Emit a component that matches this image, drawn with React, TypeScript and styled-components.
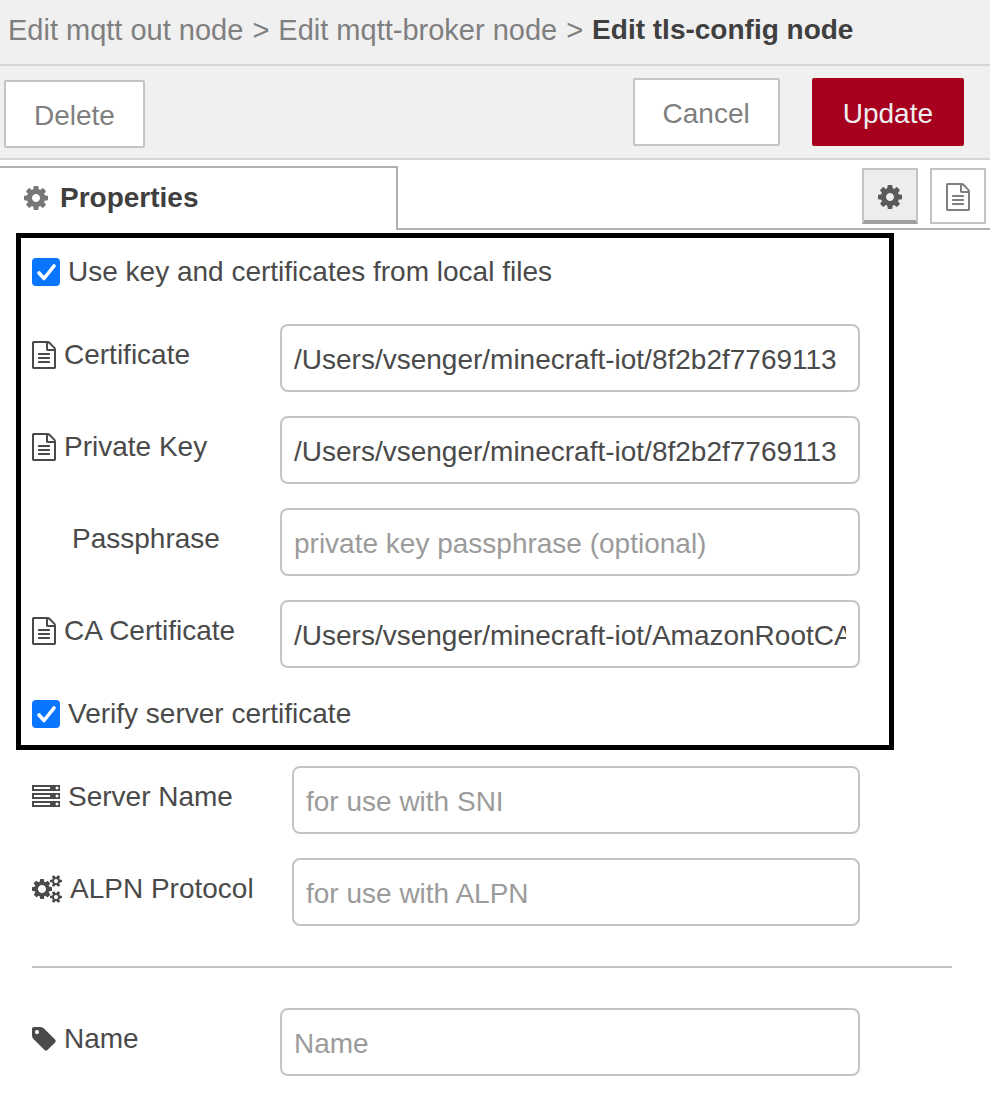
import React from 'react';
import styled, { createGlobalStyle } from 'styled-components';

const GlobalStyle = createGlobalStyle`
  *, *::before, *::after { box-sizing: border-box; }
  body {
    margin: 0;
    background: #fff;
    color: #4a4a4a;
    font-family: "Liberation Sans", Arial, sans-serif;
    font-size: 28px;
    line-height: 40px;
  }
  button, input { font: inherit; }
`;

const ICONS = {
  cog: {
    width: 24,
    box: '0 0 1536 1792',
    d: 'M1024 896q0-106-75-181t-181-75-181 75-75 181 75 181 181 75 181-75 75-181zm512-109v222q0 12-8 23t-20 13l-185 28q-19 54-39 91 35 50 107 138 10 12 10 25t-9 23q-27 37-99 108t-94 71q-12 0-26-9l-138-108q-44 23-91 38-16 136-29 186-7 28-36 28h-222q-14 0-24.5-8.5t-11.5-21.5l-28-184q-49-16-90-37l-141 107q-10 9-25 9-14 0-25-11-126-114-165-168-7-10-7-23 0-12 8-23 15-21 51-66.5t54-70.5q-27-50-41-99l-183-27q-13-2-21-12.5t-8-23.5v-222q0-12 8-23t19-13l186-28q14-46 39-92-40-57-107-138-10-12-10-24 0-10 9-23 26-36 98.5-107.5t94.5-71.5q13 0 26 10l138 107q44-23 91-38 16-136 29-186 7-28 36-28h222q14 0 24.5 8.5t11.5 21.5l28 184q49 16 90 37l142-107q9-9 24-9 13 0 25 10 129 119 165 170 7 8 7 22 0 12-8 23-15 21-51 66.5t-54 70.5q26 50 41 98l183 28q13 2 21 12.5t8 23.5z',
  },
  file: {
    width: 24,
    box: '128 0 1536 1792',
    d: 'M1596 380q28 28 48 76t20 88v1152q0 40-28 68t-68 28h-1344q-40 0-68-28t-28-68v-1600q0-40 28-68t68-28h896q40 0 88 20t76 48zm-444-244v376h376q-10-29-22-41l-313-313q-12-12-41-22zm384 1528v-1024h-416q-40 0-68-28t-28-68v-416h-768v1536h1280zm-1024-864q0-14 9-23t23-9h704q14 0 23 9t9 23v64q0 14-9 23t-23 9h-704q-14 0-23-9t-9-23v-64zm736 224q14 0 23 9t9 23v64q0 14-9 23t-23 9h-704q-14 0-23-9t-9-23v-64q0-14 9-23t23-9h704zm0 256q14 0 23 9t9 23v64q0 14-9 23t-23 9h-704q-14 0-23-9t-9-23v-64q0-14 9-23t23-9h704z',
  },
  server: {
    width: 28,
    box: '0 0 1792 1792',
    d: 'M128 1408h1024v-128h-1024v128zm0-512h1024v-128h-1024v128zm1568 448q0-40-28-68t-68-28-68 28-28 68 28 68 68 28 68-28 28-68zm-1568-960h1024v-128h-1024v128zm1568 448q0-40-28-68t-68-28-68 28-28 68 28 68 68 28 68-28 28-68zm0-512q0-40-28-68t-68-28-68 28-28 68 28 68 68 28 68-28 28-68zm96 832v384h-1792v-384h1792zm0-512v384h-1792v-384h1792zm0-512v384h-1792v-384h1792z',
  },
  cogs: {
    width: 30,
    box: '0 0 1920 1792',
    d: 'M896 896q0-106-75-181t-181-75-181 75-75 181 75 181 181 75 181-75 75-181zm768 512q0-52-38-90t-90-38-90 38-38 90q0 53 37.5 90.5t90.5 37.5 90.5-37.5 37.5-90.5zm0-1024q0-52-38-90t-90-38-90 38-38 90q0 53 37.5 90.5t90.5 37.5 90.5-37.5 37.5-90.5zm-384 421v185q0 10-7 19.5t-16 10.5l-155 24q-11 35-32 76 34 48 90 115 7 11 7 20 0 12-7 19-23 30-82.5 89.5t-78.5 59.5q-11 0-21-7l-115-90q-37 19-77 31-11 108-23 155-7 24-30 24h-186q-11 0-20-7.5t-10-17.5l-23-153q-34-10-75-31l-118 89q-7 7-20 7-11 0-21-8-144-133-144-160 0-9 7-19 10-14 41-53t47-61q-23-44-35-82l-152-24q-10-1-17-9.5t-7-19.5v-185q0-10 7-19.5t16-10.5l155-24q11-35 32-76-34-48-90-115-7-11-7-20 0-12 7-20 22-30 82-89t79-59q11 0 21 7l115 90q34-18 77-32 11-108 23-154 7-24 30-24h186q11 0 20 7.5t10 17.5l23 153q34 10 75 31l118-89q8-7 20-7 11 0 21 8 144 133 144 160 0 8-7 19-12 16-42 54t-45 60q23 48 34 82l152 23q10 2 17 10.5t7 19.5zm640 533v140q0 16-149 31-12 27-30 52 51 113 51 138 0 4-4 7-122 71-124 71-8 0-46-47t-52-68q-20 2-30 2t-30-2q-14 21-52 68t-46 47q-2 0-124-71-4-3-4-7 0-25 51-138-18-25-30-52-149-15-149-31v-140q0-16 149-31 13-29 30-52-51-113-51-138 0-4 4-7 4-2 35-20t59-34 30-16q8 0 46 46.5t52 67.5q20-2 30-2t30 2q51-71 92-112l6-2q4 0 124 70 4 3 4 7 0 25-51 138 17 23 30 52 149 15 149 31zm0-1024v140q0 16-149 31-12 27-30 52 51 113 51 138 0 4-4 7-122 71-124 71-8 0-46-47t-52-68q-20 2-30 2t-30-2q-14 21-52 68t-46 47q-2 0-124-71-4-3-4-7 0-25 51-138-18-25-30-52-149-15-149-31v-140q0-16 149-31 13-29 30-52-51-113-51-138 0-4 4-7 4-2 35-20t59-34 30-16q8 0 46 46.5t52 67.5q20-2 30-2t30 2q51-71 92-112l6-2q4 0 124 70 4 3 4 7 0 25-51 138 17 23 30 52 149 15 149 31z',
  },
  tag: {
    width: 24,
    box: '128 0 1536 1792',
    d: 'M576 448q0-53-37.5-90.5t-90.5-37.5-90.5 37.5-37.5 90.5 37.5 90.5 90.5 37.5 90.5-37.5 37.5-90.5zm1067 576q0 53-37 90l-491 492q-39 37-91 37-53 0-90-37l-715-716q-38-37-64.5-101t-26.5-117v-416q0-52 38-90t90-38h416q53 0 117 26.5t102 64.5l715 714q37 39 37 91z',
  },
};

type IconName = keyof typeof ICONS;

const Glyph = styled.svg`
  display: block;
  flex: none;
  height: 28px;
  fill: currentColor;
  fill-rule: evenodd;
`;

const Icon = ({ name }: { name: IconName }) => (
  <Glyph width={ICONS[name].width} viewBox={ICONS[name].box} aria-hidden="true">
    <path d={ICONS[name].d} />
  </Glyph>
);

const Header = styled.header`
  padding: 10px 8px 14px;
  border-bottom: 2px solid #d6d6d6;
  background: #f0f0f0;
  white-space: nowrap;
`;

const Crumbs = styled.ol`
  display: flex;
  gap: 9px;
  margin: 0;
  padding: 0;
  list-style: none;
`;

const Crumb = styled.li<{ $current?: boolean }>`
  display: flex;
  gap: 9px;
  color: ${(p) => (p.$current ? '#3f3f3f' : '#7f7f7f')};
  font-size: ${(p) => (p.$current ? 28 : 29)}px;
  font-weight: ${(p) => (p.$current ? 700 : 400)};
  &:not(:last-child)::after { content: ">"; }
`;

const Toolbar = styled.div`
  display: flex;
  align-items: flex-start;
  padding: 12px 26px 10px 4px;
  border-bottom: 2px solid #d6d6d6;
  background: #f0f0f0;
`;

const Actions = styled.div`
  display: flex;
  gap: 32px;
  margin-left: auto;
`;

const Button = styled.button<{ $primary?: boolean; $low?: boolean }>`
  height: 68px;
  margin-top: ${(p) => (p.$low ? 2 : 0)}px;
  padding: 3px ${(p) => (p.$primary ? 29 : 28)}px 0;
  border: 2px solid ${(p) => (p.$primary ? '#a6001e' : '#c4c4c4')};
  border-radius: 2px;
  background: ${(p) => (p.$primary ? '#a6001e' : '#fff')};
  color: ${(p) => (p.$primary ? '#eee' : '#7f7f7f')};
`;

const TabBar = styled.div`
  display: flex;
  padding-top: 6px;
`;

const Tab = styled.h2`
  display: flex;
  align-items: center;
  gap: 12px;
  width: 398px;
  height: 64px;
  margin: 0;
  padding: 0 0 2px 24px;
  border: solid #b0b0b0;
  border-width: 2px 2px 0 0;
  color: #3f3f3f;
  font-size: 28px;
  svg { color: #777; }
`;

const TabTools = styled.div`
  display: flex;
  flex: 1;
  justify-content: flex-end;
  gap: 12px;
  padding: 2px 4px 4px 0;
  border-bottom: 2px solid #b0b0b0;
`;

const ToolButton = styled.button<{ $active?: boolean }>`
  display: flex;
  align-items: center;
  justify-content: center;
  width: 56px;
  height: 56px;
  padding: 2px 0 0;
  border: 2px solid #c4c4c4;
  border-bottom-color: ${(p) => (p.$active ? '#a0a0a0' : '#c4c4c4')};
  box-shadow: ${(p) => (p.$active ? 'inset 0 -2px #a0a0a0' : 'none')};
  background: ${(p) => (p.$active ? '#ededed' : '#fff')};
  color: ${(p) => (p.$active ? '#5a5a5a' : '#7f7f7f')};
`;

const Form = styled.form`
  display: flex;
  flex-direction: column;
  padding: 3px 0 24px;
`;

const CheckRow = styled.label`
  display: flex;
  align-items: center;
  gap: 8px;
  height: 44px;
`;

const Highlight = styled.fieldset`
  display: flex;
  flex-direction: column;
  gap: 24px;
  min-width: 0;
  margin: 0 96px 16px 16px;
  padding: 12px 29px 9px 11px;
  border: 5px solid #000;
  ${CheckRow}:first-child { margin-bottom: 6px; }
`;

const CheckBox = styled.input`
  appearance: none;
  width: 28px;
  height: 28px;
  margin: 0;
  border-radius: 4px;
  background: #fff;
  &:checked {
    background: #0a75ff url("data:image/svg+xml,%3Csvg xmlns='http://www.w3.org/2000/svg' viewBox='0 0 28 28'%3E%3Cpath d='M7 15l5 5.500L22 8' fill='none' stroke='white' stroke-width='3.600' stroke-linecap='round' stroke-linejoin='round'/%3E%3C/svg%3E");
  }
`;

const Fields = styled.div`
  display: flex;
  flex-direction: column;
  gap: 24px;
  margin: 0 130px 0 32px;
`;

const Row = styled.div`
  display: flex;
  align-items: flex-start;
`;

const Label = styled.label<{ $wide?: boolean; $indent?: boolean }>`
  display: flex;
  flex: none;
  align-items: center;
  gap: 8px;
  width: ${(p) => (p.$wide ? 260 : 248)}px;
  height: 62px;
  padding-left: ${(p) => (p.$indent ? 40 : 0)}px;
  white-space: nowrap;
`;

const TextBox = styled.input`
  flex: 1;
  min-width: 0;
  height: 68px;
  padding: 4px 12px 0;
  border: 2px solid #c4c4c4;
  border-radius: 8px;
  background: #fff;
  color: #4a4a4a;
  outline: 0;
  &::placeholder { color: #9b9b9b; opacity: 1; }
`;

const Divider = styled.hr`
  width: auto;
  height: 2px;
  margin: 40px 38px 40px 32px;
  border: 0;
  background: #c4c4c4;
`;

interface FieldProps {
  id: string;
  label: string;
  icon?: IconName;
  value?: string;
  placeholder?: string;
  wide?: boolean;
}

const Field = ({ id, label, icon, value, placeholder, wide }: FieldProps) => (
  <Row>
    <Label htmlFor={id} $wide={wide} $indent={!icon}>
      {icon && <Icon name={icon} />}
      {label}
    </Label>
    <TextBox id={id} type="text" defaultValue={value} placeholder={placeholder} />
  </Row>
);

export default function App() {
  return (
    <>
      <GlobalStyle />
      <Header>
        <Crumbs>
          <Crumb>Edit mqtt out node</Crumb>
          <Crumb>Edit mqtt-broker node</Crumb>
          <Crumb $current>Edit tls-config node</Crumb>
        </Crumbs>
      </Header>
      <Toolbar>
        <Button type="button" $low>Delete</Button>
        <Actions>
          <Button type="button">Cancel</Button>
          <Button type="button" $primary>Update</Button>
        </Actions>
      </Toolbar>
      <TabBar>
        <Tab><Icon name="cog" />Properties</Tab>
        <TabTools>
          <ToolButton type="button" aria-label="Properties" $active><Icon name="cog" /></ToolButton>
          <ToolButton type="button" aria-label="Description"><Icon name="file" /></ToolButton>
        </TabTools>
      </TabBar>
      <Form>
        <Highlight>
          <CheckRow>
            <CheckBox type="checkbox" defaultChecked />
            Use key and certificates from local files
          </CheckRow>
          <Field id="cert" icon="file" label="Certificate" value="/Users/vsenger/minecraft-iot/8f2b2f7769113" />
          <Field id="key" icon="file" label="Private Key" value="/Users/vsenger/minecraft-iot/8f2b2f7769113" />
          <Field id="passphrase" label="Passphrase" placeholder="private key passphrase (optional)" />
          <Field id="ca" icon="file" label="CA Certificate" value="/Users/vsenger/minecraft-iot/AmazonRootCA" />
          <CheckRow>
            <CheckBox type="checkbox" defaultChecked />
            Verify server certificate
          </CheckRow>
        </Highlight>
        <Fields>
          <Field id="server" icon="server" label="Server Name" placeholder="for use with SNI" wide />
          <Field id="alpn" icon="cogs" label="ALPN Protocol" placeholder="for use with ALPN" wide />
        </Fields>
        <Divider />
        <Fields>
          <Field id="name" icon="tag" label="Name" placeholder="Name" />
        </Fields>
      </Form>
    </>
  );
}
